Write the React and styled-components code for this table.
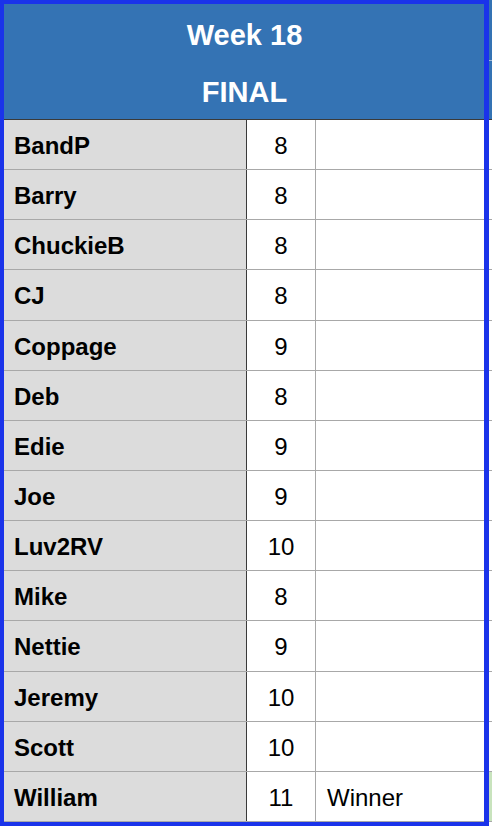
import React from 'react'
import styled, { createGlobalStyle } from 'styled-components'

const players = [
  { name: 'BandP', score: 8 },
  { name: 'Barry', score: 8 },
  { name: 'ChuckieB', score: 8 },
  { name: 'CJ', score: 8 },
  { name: 'Coppage', score: 9 },
  { name: 'Deb', score: 8 },
  { name: 'Edie', score: 9 },
  { name: 'Joe', score: 9 },
  { name: 'Luv2RV', score: 10 },
  { name: 'Mike', score: 8 },
  { name: 'Nettie', score: 9 },
  { name: 'Jeremy', score: 10 },
  { name: 'Scott', score: 10 },
  { name: 'William', score: 11, note: 'Winner' },
]

const GlobalStyle = createGlobalStyle`
  html, body {
    margin: 0;
    padding: 0;
    background: #ffffff;
  }
`

export default function App() {
  return (
    <Page>
      <GlobalStyle />
      <Sheet>
        <Header>
          <HeaderLine>Week 18</HeaderLine>
          <HeaderLine>FINAL</HeaderLine>
        </Header>
        <SideHeader>
          <SideHeaderCell />
          <SideHeaderCell />
        </SideHeader>
        <Rows>
          {players.map((p) => (
            <Row key={p.name}>
              <NameCell>{p.name}</NameCell>
              <ScoreCell>{p.score}</ScoreCell>
              <NoteCell>{p.note}</NoteCell>
              <SideCell $win={!!p.note} />
            </Row>
          ))}
        </Rows>
      </Sheet>
      <Frame />
    </Page>
  )
}

const Page = styled.div`
  position: relative;
  width: 492px;
  height: 826px;
  overflow: hidden;
  background: #ffffff;
  font-family: "Liberation Sans", Arial, sans-serif;
`

const Sheet = styled.div`
  display: grid;
  grid-template-columns: 489px 60px;
  grid-template-rows: 120px 702px;
  width: 549px;
`

const Header = styled.div`
  background: #3473b4;
  border-bottom: 1px solid #3a3a3a;
  display: flex;
  flex-direction: column;
  align-items: center;
  padding-top: 21px;
  gap: 28px;
  color: #ffffff;
`

const HeaderLine = styled.div`
  font-size: 29px;
  font-weight: 700;
  line-height: 29px;
`

const SideHeader = styled.div`
  background: #3473b4;
  border-bottom: 1px solid #3a3a3a;
  display: grid;
  grid-template-rows: 61px 1fr;
`

const SideHeaderCell = styled.div`
  border-bottom: 1px solid #9fb9d8;
  &:last-child {
    border-bottom: none;
  }
`

const Rows = styled.div`
  grid-column: 1 / span 2;
  display: grid;
  grid-template-rows: repeat(14, 1fr);
`

const Row = styled.div`
  display: grid;
  grid-template-columns: 247px 69px 173px 60px;
  border-bottom: 1px solid #a8a8a8;
  font-size: 24px;
  color: #000000;
`

const NameCell = styled.div`
  background: #dcdcdc;
  border-right: 1px solid #3a3a3a;
  display: flex;
  align-items: center;
  padding: 3px 0 0 14px;
  font-weight: 700;
`

const ScoreCell = styled.div`
  border-right: 1px solid #a8a8a8;
  display: flex;
  align-items: center;
  justify-content: center;
  padding-top: 3px;
`

const NoteCell = styled.div`
  border-right: 1px solid #a8a8a8;
  display: flex;
  align-items: center;
  padding: 3px 0 0 11px;
`

const SideCell = styled.div`
  background: ${(p) => (p.$win ? '#c8e3bd' : '#ffffff')};
`

const Frame = styled.div`
  position: absolute;
  left: 0;
  top: 0;
  width: 489px;
  height: 826px;
  box-sizing: border-box;
  border: 4px solid #1a33ea;
  border-right-width: 5px;
  pointer-events: none;
`
